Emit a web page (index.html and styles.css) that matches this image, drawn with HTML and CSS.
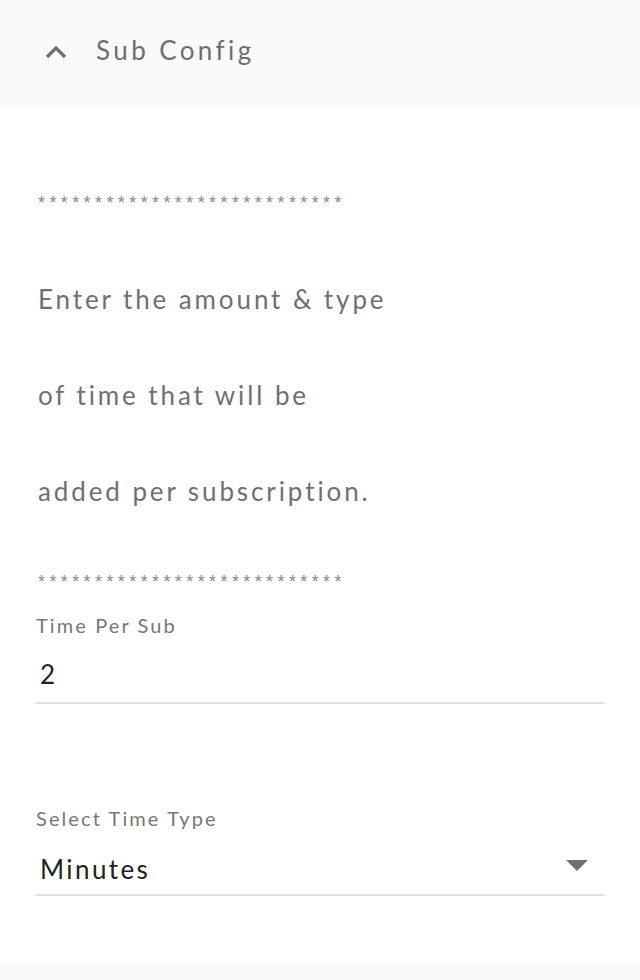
FILE: index.html
```html
<!DOCTYPE html>
<html>
<head>
<meta charset="utf-8">
<link rel="stylesheet" href="styles.css">
</head>
<body>
<div class="panel">
  <div class="header">
    <svg class="chev" width="24" height="16" viewBox="0 0 24 16"><path d="M3 13 L12 4 L21 13" fill="none" stroke="#6f6f6f" stroke-width="3.2"/></svg>
    <span class="title">Sub Config</span>
  </div>
  <div class="content">
    <div class="stars">***************************</div>
    <div class="desc">
      <p>Enter the amount &amp; type</p>
      <p>of time that will be</p>
      <p>added per subscription.</p>
    </div>
    <div class="stars stars2">***************************</div>
    <div class="field">
      <label class="flabel">Time Per Sub</label>
      <div class="fvalue">2</div>
    </div>
    <div class="field field-select">
      <label class="flabel">Select Time Type</label>
      <div class="fvalue select">
        <span>Minutes</span>
        <svg class="caret" width="22" height="11" viewBox="0 0 22 11"><path d="M0 0 L22 0 L11 11 Z" fill="#707070"/></svg>
      </div>
    </div>
  </div>
  <div class="footer"></div>
</div>
</body>
</html>
```
FILE: styles.css
```css
html, body {
  margin: 0;
  padding: 0;
  background: #ffffff;
}
.panel {
  width: 640px;
  height: 980px;
  display: flex;
  flex-direction: column;
  font-family: "Lato", "Open Sans", sans-serif;
}
.header {
  height: 107px;
  background: #fafafa;
  display: flex;
  align-items: center;
  padding-left: 44px;
  box-sizing: border-box;
}
.chev {
  margin-right: 28px;
  margin-top: -4px;
}
.title {
  font-size: 26px;
  color: #6e6e6e;
  letter-spacing: 3.4px;
  margin-top: -8px;
}
.content {
  padding: 0 36px 0 38px;
  flex: 1;
}
.stars {
  font-family: "Liberation Sans", sans-serif;
  font-size: 18px;
  color: #8a8a8a;
  letter-spacing: 4.4px;
  line-height: 20px;
  margin-top: 86px;
  white-space: nowrap;
}
.desc {
  margin-top: 38px;
}
.desc p {
  margin: 0;
  font-size: 26px;
  line-height: 96px;
  color: #707070;
  letter-spacing: 2.9px;
}
.stars2 {
  margin-top: 33px;
}
.field {
  border-bottom: 2px solid #e0e0e0;
  margin-left: -2px;
}
.flabel {
  display: block;
  font-size: 20px;
  color: #777;
  letter-spacing: 2.1px;
  margin-top: 19px;
  line-height: 28px;
}
.fvalue {
  font-size: 26px;
  color: #222;
  letter-spacing: 2.4px;
  line-height: 40px;
  padding: 15px 0 8px 4px;
}
.field-select {
  margin-top: 100px;
}
.select {
  display: flex;
  justify-content: space-between;
  align-items: center;
  padding-top: 17px;
  padding-bottom: 5px;
  padding-right: 16px;
}
.caret {
  margin-top: -8px;
}
.footer {
  height: 18px;
  background: #fafafa;
}
```
